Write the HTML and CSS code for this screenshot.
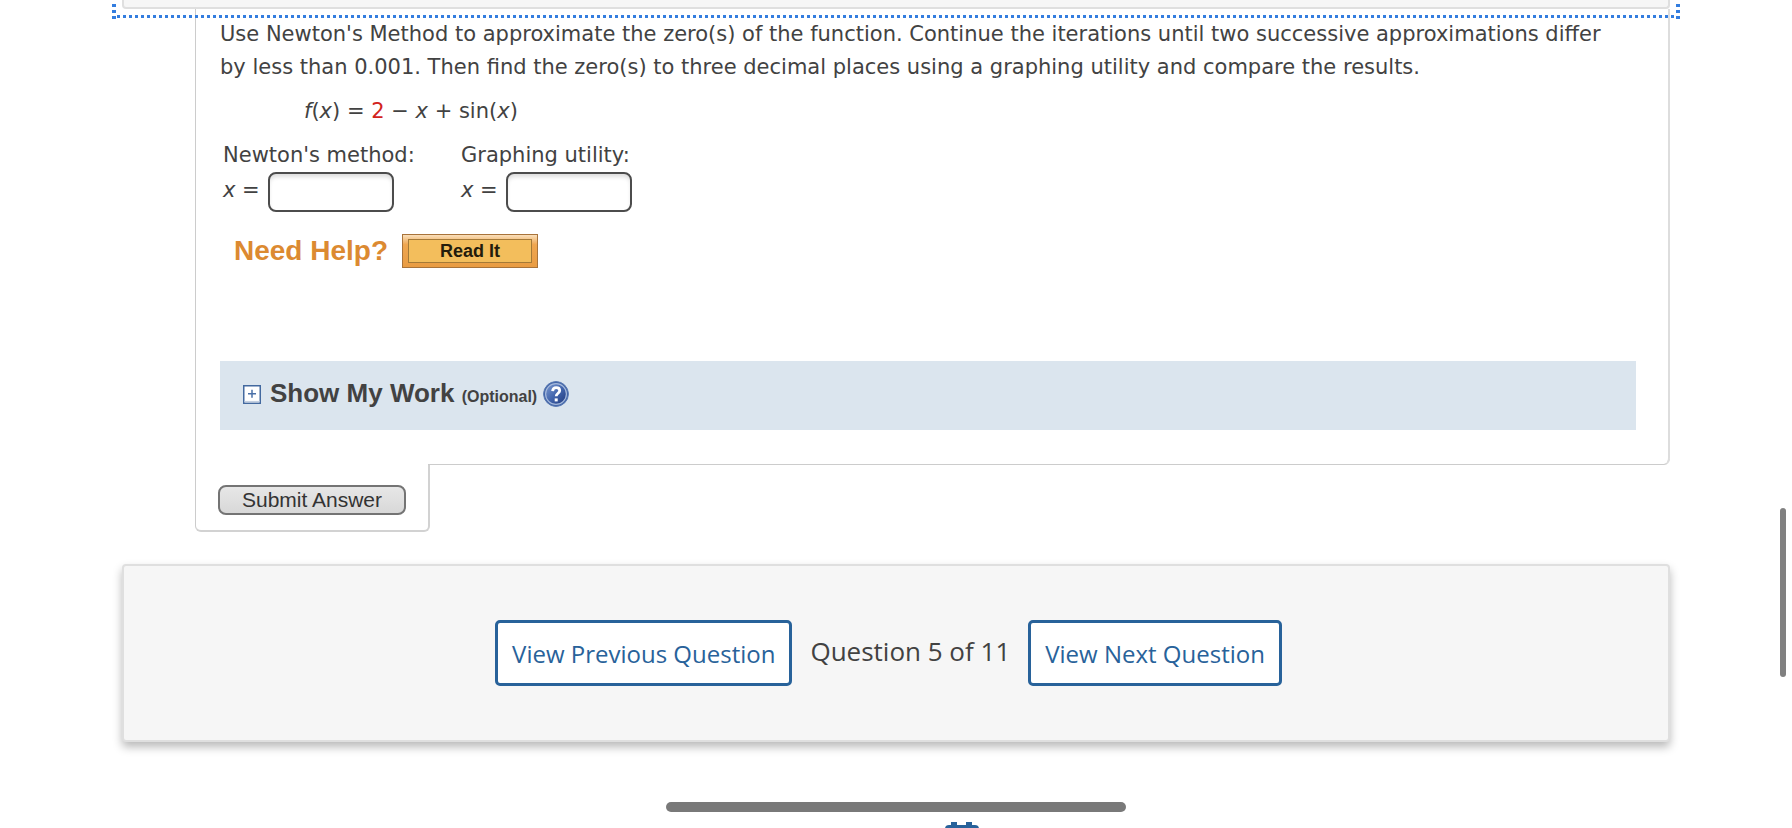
FILE: index.html
```html
<!DOCTYPE html>
<html lang="en">
<head>
<meta charset="utf-8">
<title>Question 5 of 11</title>
<link rel="stylesheet" href="styles.css">
</head>
<body>
<header class="question-header"></header>
<div class="focus-ring"></div>
<main class="page">
  <form class="question">
    <section class="question-body">
      <p class="prompt">Use Newton's Method to approximate the zero(s) of the function. Continue the iterations until two successive approximations differ by less than 0.001. Then find the zero(s) to three decimal places using a graphing utility and compare the results.</p>
      <p class="formula"><i>f</i>(<i>x</i>) = <span class="value">2</span> − <i>x</i> + sin(<i>x</i>)</p>
      <div class="answers">
        <div class="answer">
          <label for="newton">Newton's method:</label>
          <div class="answer-row"><span><i>x</i> =</span><input id="newton" type="text"></div>
        </div>
        <div class="answer">
          <label for="graphing">Graphing utility:</label>
          <div class="answer-row"><span><i>x</i> =</span><input id="graphing" type="text"></div>
        </div>
      </div>
      <div class="help">
        <span class="help-title">Need Help?</span>
        <button class="read-it" type="button"><span>Read It</span></button>
      </div>
      <div class="work">
        <button class="toggle" type="button" aria-label="Expand">
          <svg width="18" height="19" viewBox="0 0 18 19"><rect x=".75" y=".75" width="16.5" height="17.5" fill="#fff" stroke="#43699f" stroke-width="1.5"/><path d="M1.5 16.6h15" stroke="#c3cfe0" stroke-width="1.4"/><path d="M5 8.8h8M9 4.8v8" stroke="#4a70a8" stroke-width="1.5"/></svg>
        </button>
        <h2 class="work-title">Show My Work <small>(Optional)</small></h2>
        <button class="hint" type="button" aria-label="Help">
          <svg width="26" height="26" viewBox="0 0 26 26"><defs><linearGradient id="ball" x1="0" y1="0" x2="1" y2="1"><stop offset="0" stop-color="#7e9bd0"/><stop offset=".5" stop-color="#4366ad"/><stop offset="1" stop-color="#20397c"/></linearGradient></defs><circle cx="13" cy="13" r="12.4" fill="#4265a6" stroke="#5878b3"/><circle cx="13" cy="13" r="10.4" fill="url(#ball)" stroke="#a5b9dc" stroke-width="1.2"/><path d="M9.6 10.2c.2-2.5 1.7-3.5 3.6-3.5 2.1 0 3.5 1.2 3.5 3 0 2.4-3.5 2.7-3.5 5.5" fill="none" stroke="#fff" stroke-width="2.8"/><rect x="11.7" y="17.4" width="3" height="3" fill="#fff"/></svg>
        </button>
      </div>
    </section>
    <div class="question-foot">
      <div class="submit-tab"><button class="submit" type="submit">Submit Answer</button></div>
      <div class="foot-edge"></div>
    </div>
  </form>
  <nav class="pager">
    <button class="pager-button" type="button">View Previous Question</button>
    <span class="pager-status">Question 5 of 11</span>
    <button class="pager-button" type="button">View Next Question</button>
  </nav>
</main>
<svg class="calendar" width="34" height="34" viewBox="0 0 34 34"><path d="M0 34V7q0-4 4-4h2V0h6v3h9V0h6v3h3q4 0 4 4v27z" fill="#28629a"/></svg>
<div class="scroll-y"></div>
<div class="scroll-x"></div>
</body>
</html>
```
FILE: styles.css
```css
* { box-sizing: border-box; }
html { height: 100%; overflow: hidden; }
body {
  position: relative;
  height: 100%;
  margin: 0;
  overflow: hidden;
  background: #fff;
  color: #424242;
  font-family: Verdana, "DejaVu Sans", sans-serif;
  font-size: 21px;
}
button, input { font: inherit; color: inherit; margin: 0; }
p, h2 { margin: 0; }

.question-header {
  height: 9px;
  margin: 0 122px;
  background: #f6f6f6;
  border: 2px solid #dfdfdf;
  border-top: 0;
  border-radius: 0 0 4px 4px;
}
.focus-ring {
  position: absolute;
  top: 4px;
  left: 112px;
  right: 112px;
  height: 15px;
  background:
    repeating-linear-gradient(90deg, #337ddf 0 3px, transparent 3px 6px) 5px 11px / calc(100% - 10px) 3px no-repeat,
    repeating-linear-gradient(#337ddf 0 3px, transparent 3px 6px) 0 0 / 4px 15px no-repeat,
    repeating-linear-gradient(#337ddf 0 3px, transparent 3px 6px) 100% 0 / 4px 15px no-repeat;
}
.page { margin: 0 122px; }

.question { margin-left: 73px; }
.question-body {
  padding: 9px 32px 34px 24px;
  border-left: 1px solid #ccc;
  border-right: 2px solid #ddd;
  border-bottom-right-radius: 6px;
}
.prompt { line-height: 33px; padding-right: 8px; }
.formula { margin: 11px 0 0 84px; line-height: 33px; }
.value { color: #d2231c; }

.answers { display: flex; padding: 10px 0 0 3px; }
.answer { width: 238px; }
.answer label { display: block; line-height: 34px; }
.answer-row { display: flex; gap: 9px; }
.answer-row span { width: 36px; line-height: 36px; white-space: nowrap; }
.answer-row input {
  width: 126px;
  height: 40px;
  padding: 0 8px;
  background: #fff;
  border: 2px solid #4c4c4c;
  border-radius: 8px;
  box-shadow: inset 0 4px 4px -1px #ddd;
}

.help {
  display: flex;
  align-items: center;
  gap: 14px;
  margin: 22px 0 0 14px;
  font-family: Arial, "Liberation Sans", sans-serif;
  font-weight: bold;
}
.help-title { color: #dc8a31; font-size: 28px; line-height: 32px; }
.read-it {
  width: 136px;
  height: 34px;
  padding: 4px 5px;
  border: 1px solid #a8733a;
  background: linear-gradient(#f9dfbb, #efa650 30%, #e99c43);
  color: #241c0c;
  font-size: 18px;
}
.read-it span {
  display: block;
  border: 1px solid #a47a38;
  background: #f3be5c;
  line-height: 22px;
}

.work {
  display: flex;
  align-items: center;
  gap: 9px;
  height: 69px;
  margin-top: 93px;
  padding: 0 23px 3px;
  background: #dbe5ee;
  font-family: Arial, "Liberation Sans", sans-serif;
}
.work-title { padding-top: 2px; font-size: 26px; line-height: 32px; }
.work-title small { font-size: 16px; }
.toggle, .hint { display: flex; padding: 0; border: 0; background: none; }
.hint { margin-left: -3px; }

.question-foot { display: flex; }
.submit-tab {
  width: 235px;
  padding: 21px 22px 15px;
  border: 2px solid #d2d2d2;
  border-top: 0;
  border-left: 1px solid #ccc;
  border-radius: 0 0 6px 6px;
}
.submit {
  display: block;
  width: 188px;
  height: 30px;
  padding: 0;
  border: 2px solid #747474;
  border-radius: 8px;
  background: linear-gradient(#e7e7e7, #d8d8d8);
  color: #333;
  font-family: Arial, "Liberation Sans", sans-serif;
  font-size: 21px;
  line-height: 26px;
}
.foot-edge {
  flex: 1;
  height: 6px;
  margin: -5px 0 0 -2px;
  border-right: 2px solid #ddd;
  border-bottom: 1px solid #ccc;
  border-bottom-right-radius: 6px;
}

.pager {
  display: flex;
  justify-content: center;
  align-items: center;
  gap: 18px;
  margin-top: 32px;
  padding: 54px 15px 54px 0;
  border: 2px solid #dfdfdf;
  border-radius: 4px;
  background: #f6f6f6;
  box-shadow: 0 5px 10px rgba(0, 0, 0, .28);
  font-family: "Open Sans", sans-serif;
}
.pager-button {
  height: 66px;
  padding: 0 14px;
  border: 3px solid #28629a;
  border-radius: 5px;
  background: #fff;
  color: #28629a;
  font-size: 24px;
}
.pager-status { font-size: 26px; padding-bottom: 4px; }

.calendar { position: absolute; left: 945px; top: 822px; }
.scroll-y {
  position: absolute;
  right: 6px;
  top: 508px;
  width: 6px;
  height: 169px;
  border-radius: 3px;
  background: #808080;
}
.scroll-x {
  position: absolute;
  left: 666px;
  bottom: 16px;
  width: 460px;
  height: 10px;
  border-radius: 5px;
  background: #797979;
}
```
